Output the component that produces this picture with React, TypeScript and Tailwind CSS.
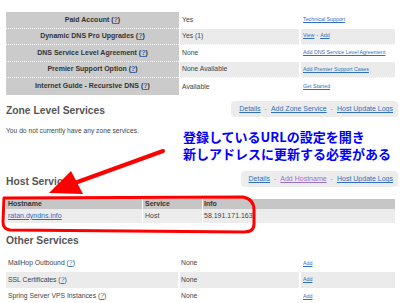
import React from 'react'

const link = 'text-[#2f6fc0] underline'

function Help() {
  return (
    <>
      {' ('}
      <span className={link}>?</span>
      {')'}
    </>
  )
}

const accountRows = [
  { label: 'Paid Account', value: 'Yes', action: ['Technical Support'] },
  { label: 'Dynamic DNS Pro Upgrades', value: 'Yes (1)', action: ['View', 'Add'] },
  { label: 'DNS Service Level Agreement', value: 'None', action: ['Add DNS Service Level Agreement'] },
  { label: 'Premier Support Option', value: 'None Available', action: ['Add Premier Support Cases'] },
  { label: 'Internet Guide - Recursive DNS', value: 'Available', action: ['Get Started'] },
]

const otherRows = [
  { label: 'MailHop Outbound', value: 'None' },
  { label: 'SSL Certificates', value: 'None' },
  { label: 'Spring Server VPS Instances', value: 'None' },
]

function NavBox({ items }: { items: { text: string; visited?: boolean }[] }) {
  return (
    <div className="flex h-[16px] items-center rounded-[4px] bg-[#ececec] pl-[8px] pr-[5px] mr-[-3px] text-[7px] leading-none">
      {items.map((it, i) => (
        <React.Fragment key={it.text}>
          {i > 0 && <span className="px-[4px] text-[#999]">-</span>}
          <span className={it.visited ? 'text-[#9a6fc8] underline' : link}>{it.text}</span>
        </React.Fragment>
      ))}
    </div>
  )
}

export default function App() {
  return (
    <div className="relative h-[303px] w-[400px] overflow-hidden bg-white font-['Liberation_Sans',Arial,sans-serif] text-[#444]">
      <div className="pl-[6px] pr-[5px] pt-[12px]">
        {/* account table */}
        <div className="grid grid-cols-[173px_119px_1fr] gap-x-[1px]">
          {accountRows.map((r, i) => {
            const shade = i % 2 === 1 ? 'bg-[#ebebeb]' : 'bg-white'
            const last = i === accountRows.length - 1
            const line = last ? '' : 'border-b border-dotted border-white'
            return (
              <React.Fragment key={r.label}>
                <div className={`flex h-[16.6px] items-center justify-center bg-[#cbcbcb] text-[7px] font-bold text-[#333] ${line}`}>
                  <span>{r.label}<Help /></span>
                </div>
                <div className={`flex h-[16.6px] items-center pl-[2px] text-[6.8px] ${shade} ${line}`}>{r.value}</div>
                <div className={`ml-[1px] flex h-[16.6px] items-center pl-[2px] text-[5.3px] ${shade} ${line}`}>
                  {r.action.map((a, j) => (
                    <React.Fragment key={a}>
                      {j > 0 && <span className="px-[2px]">-</span>}
                      <span className={link}>{a}</span>
                    </React.Fragment>
                  ))}
                </div>
              </React.Fragment>
            )
          })}
        </div>

        {/* zone level services */}
        <div className="mt-[6px] flex items-start justify-between">
          <h2 className="mt-[5px] text-[10.3px] font-bold leading-none text-[#555]">Zone Level Services</h2>
          <NavBox items={[{ text: 'Details' }, { text: 'Add Zone Service' }, { text: 'Host Update Logs' }]} />
        </div>
        <p className="mt-[11px] text-[6.7px] leading-none text-[#444]">You do not currently have any zone services.</p>

        {/* host services */}
        <div className="mt-[36px] flex items-start justify-between">
          <h2 className="mt-[6px] text-[10.3px] font-bold leading-none text-[#555]">Host Services</h2>
          <NavBox items={[{ text: 'Details' }, { text: 'Add Hostname', visited: true }, { text: 'Host Update Logs' }]} />
        </div>
        <div className="mt-[12px] grid grid-cols-[136px_59px_1fr] gap-x-[1px]">
          <div className="flex h-[10px] items-center bg-[#c6c6c6] pl-[2px] text-[7px] font-bold text-[#333]">Hostname</div>
          <div className="flex h-[10px] items-center bg-[#c6c6c6] pl-[2px] text-[7px] font-bold text-[#333]">Service</div>
          <div className="flex h-[10px] items-center bg-[#c6c6c6] pl-[1px] text-[7px] font-bold text-[#333]">Info</div>
          <div className="flex h-[14px] items-center bg-[#ececec] pl-[2px] text-[7px]"><span className={link}>ratan.dyndns.info</span></div>
          <div className="flex h-[14px] items-center bg-[#ececec] pl-[2px] text-[7px]">Host</div>
          <div className="flex h-[14px] items-center bg-[#ececec] pl-[1px] text-[7px]">58.191.171.163</div>
        </div>

        {/* other services */}
        <h2 className="mt-[13px] text-[10.3px] font-bold leading-none text-[#555]">Other Services</h2>
        <div className="mt-[9px] grid grid-cols-[172px_119px_1fr] gap-x-[2px]">
          {otherRows.map((r, i) => {
            const shade = i % 2 === 1 ? 'bg-[#ebebeb]' : 'bg-white'
            return (
              <React.Fragment key={r.label}>
                <div className={`flex h-[16.5px] items-center pl-[2px] text-[6.8px] ${shade}`}>
                  <span>{r.label}<Help /></span>
                </div>
                <div className={`flex h-[16.5px] items-center pl-[1px] text-[6.8px] ${shade}`}>{r.value}</div>
                <div className={`flex h-[16.5px] items-center pl-[2px] text-[5.3px] ${shade}`}>
                  <span className={link}>Add</span>
                </div>
              </React.Fragment>
            )
          })}
        </div>
      </div>

      {/* annotation overlay */}
      <div className="absolute left-[183px] top-[128px] font-['Noto_Sans_CJK_JP',sans-serif] text-[13px] font-bold text-[#0000ff]">
        <div className="h-[17px] leading-[17px]">登録しているURLの設定を開き</div>
        <div className="h-[17px] leading-[17px]">新しアドレスに更新する必要がある</div>
      </div>
      <svg className="pointer-events-none absolute inset-0" width="400" height="303" viewBox="0 0 400 303">
        <line x1="163" y1="151" x2="72" y2="184" stroke="#f00" strokeWidth="4" strokeLinecap="round" />
        <polygon points="49,193 71,171 83,194" fill="#f00" />
        <path
          d="M4 198 L243 197 Q254 199 254 210 L254 224 Q254 232 244 232 L10 230 Q3 229 3 222 Z"
          fill="none"
          stroke="#f00"
          strokeWidth="3"
          strokeLinejoin="round"
        />
      </svg>
    </div>
  )
}
